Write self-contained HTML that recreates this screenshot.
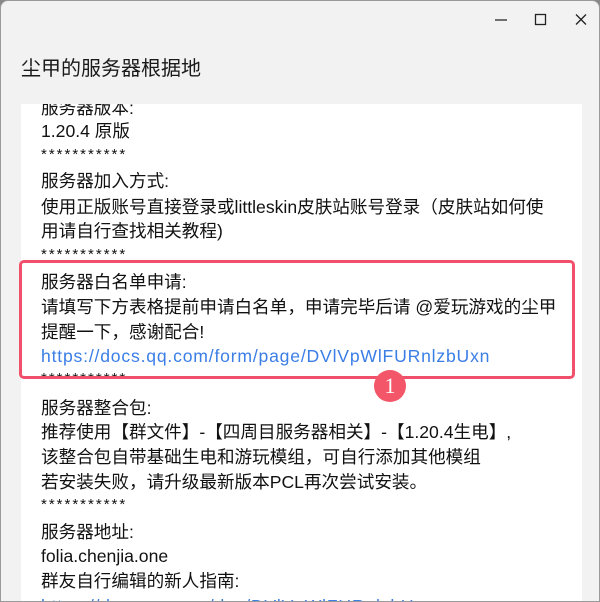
<!DOCTYPE html>
<html><head><meta charset="utf-8"><style>
html,body{margin:0;padding:0;width:600px;height:600px;overflow:hidden;background:#888;}
.win{position:absolute;left:0;top:0;width:598px;height:600px;background:#f2f2f2;border:1px solid #9a9a9a;border-radius:8px 8px 0 0;overflow:hidden;}
.t{position:absolute;font-family:"Liberation Sans","Noto Sans CJK SC",sans-serif;font-size:20px;line-height:24px;color:#1a1a1a;white-space:nowrap;}
.panel{position:absolute;left:20px;top:103px;width:561px;height:510px;background:#fff;overflow:hidden;}
.l{position:absolute;left:20px;font-family:"Liberation Sans","Noto Sans CJK SC",sans-serif;font-size:17.6px;line-height:22px;color:#111;white-space:nowrap;}
.s{font-size:15px;letter-spacing:2px;}
.a{color:#3a7ee6;letter-spacing:0.8px;}
.box{position:absolute;left:18px;top:259px;width:550px;height:113px;border:3px solid #f0506a;border-radius:5px;}
.badge{position:absolute;left:373px;top:369px;width:32px;height:32px;border-radius:50%;background:#f25668;color:#fff;font-family:"Liberation Serif",serif;font-size:22px;line-height:32px;text-align:center;}
</style></head><body>
<div class="win">
<svg style="position:absolute;left:490px;top:11px" width="110" height="20">
<line x1="4" y1="8" x2="16" y2="8" stroke="#222" stroke-width="1.3"/>
<rect x="44.5" y="2.5" width="10" height="10" fill="none" stroke="#222" stroke-width="1.3"/>
<path d="M85 2.5 L95 12.5 M95 2.5 L85 12.5" stroke="#222" stroke-width="1.3"/>
</svg>
<div class="t" style="left:20px;top:56px;">尘甲的服务器根据地</div>
<div class="panel">
<div class="l" style="top:-7px">服务器版本:</div>
<div class="l" style="top:16px">1.20.4 原版</div>
<div class="l s" style="top:40px">***********</div>
<div class="l" style="top:66px">服务器加入方式:</div>
<div class="l" style="top:92px">使用正版账号直接登录或littleskin皮肤站账号登录（皮肤站如何使</div>
<div class="l" style="top:116px">用请自行查找相关教程)</div>
<div class="l s" style="top:140px">***********</div>
<div class="l" style="top:167px">服务器白名单申请:</div>
<div class="l" style="top:192px">请填写下方表格提前申请白名单，申请完毕后请 @爱玩游戏的尘甲</div>
<div class="l" style="top:217px">提醒一下，感谢配合!</div>
<div class="l a" style="top:241px">https://docs.qq.com/form/page/DVlVpWlFURnlzbUxn</div>
<div class="l s" style="top:264px">***********</div>
<div class="l" style="top:293px">服务器整合包:</div>
<div class="l" style="top:317px">推荐使用【群文件】-【四周目服务器相关】-【1.20.4生电】,</div>
<div class="l" style="top:342px">该整合包自带基础生电和游玩模组，可自行添加其他模组</div>
<div class="l" style="top:367px">若安装失败，请升级最新版本PCL再次尝试安装。</div>
<div class="l s" style="top:390px">***********</div>
<div class="l" style="top:417px">服务器地址:</div>
<div class="l" style="top:441px">folia.chenjia.one</div>
<div class="l" style="top:466px">群友自行编辑的新人指南:</div>
<div class="l a" style="top:491px">https://docs.qq.com/doc/DVlVpWlFURnlzbUxn</div>
</div>
<div class="box"></div>
<div class="badge">1</div>
</div>
</body></html>
